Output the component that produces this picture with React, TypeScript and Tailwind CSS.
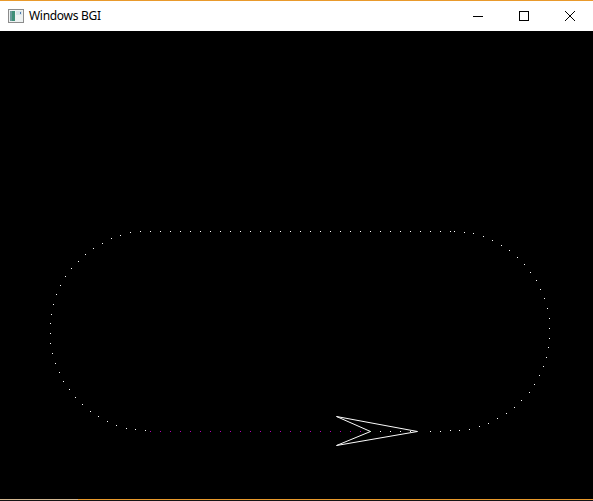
const WHITE = '#fcfcfc'
const MAGENTA = '#b400b4'
const GREEN = '#3cd83c'

// pixel dots along the track, page coordinates
const arcRight: [number, number][] = [
  [454, 231], [464, 232], [473, 233], [483, 236], [492, 240], [501, 245], [509, 250],
  [517, 257], [524, 264], [530, 272], [536, 280], [540, 289], [544, 298], [547, 308],
  [549, 318], [549, 328], [549, 338], [548, 347], [546, 357], [543, 366], [539, 375],
  [534, 384], [529, 392], [521, 400], [514, 407], [506, 413], [497, 418], [488, 423],
  [479, 426], [469, 429], [459, 430], [450, 430], [440, 431], [430, 431],
]

const arcLeft: [number, number][] = [
  [145, 430], [135, 429], [126, 428], [116, 425], [107, 421], [98, 416], [90, 411],
  [82, 404], [75, 397], [69, 389], [63, 381], [59, 372], [55, 363], [52, 353],
  [50, 343], [50, 333], [50, 323], [51, 314], [53, 304], [56, 294], [60, 285],
  [65, 276], [71, 268], [78, 261], [85, 254], [93, 248], [102, 243], [111, 238],
  [120, 235], [130, 232],
]

function buildDots() {
  const out: { x: number; y: number; c: string }[] = []
  for (let x = 140; x <= 450; x += 10) out.push({ x, y: 231, c: WHITE })
  arcRight.forEach(([x, y]) => out.push({ x, y, c: WHITE }))
  for (let x = 380; x <= 410; x += 10) out.push({ x, y: 431, c: WHITE })
  out.push({ x: 370, y: 431, c: GREEN })
  for (let x = 150; x <= 360; x += 10) out.push({ x, y: 431, c: MAGENTA })
  arcLeft.forEach(([x, y]) => out.push({ x, y, c: WHITE }))
  return out
}

function AppIcon() {
  return (
    <svg width="16" height="14" viewBox="0 0 16 14" shapeRendering="crispEdges">
      <rect x="0.5" y="0.5" width="15" height="13" fill="#eef2f2" stroke="#8c8c8c" />
      <rect x="2" y="2" width="5" height="10" fill="#3f8f78" />
      <rect x="2" y="2" width="2" height="10" fill="#6a9a9a" />
      <rect x="8" y="2" width="6" height="4" fill="#d8e4e8" />
      <rect x="12" y="3" width="1" height="2" fill="#4a78b0" />
    </svg>
  )
}

function TitleBar() {
  return (
    <div className="flex h-[31px] items-stretch border-t border-[#e99a2c] bg-white">
      <div className="flex flex-1 items-center gap-[5px] pl-[8px]">
        <AppIcon />
        <span
          className="text-[12px] tracking-[-0.3px] text-black"
          style={{ fontFamily: '"Noto Sans", "Open Sans", sans-serif' }}
        >
          Windows BGI
        </span>
      </div>
      <div className="flex w-[46px] items-center justify-center">
        <div className="h-px w-[10px] bg-black" />
      </div>
      <div className="flex w-[46px] items-center justify-center">
        <div className="h-[10px] w-[10px] border border-black" />
      </div>
      <div className="flex w-[46px] items-center justify-center">
        <svg width="10" height="10" viewBox="0 0 10 10">
          <path d="M0 0L10 10M10 0L0 10" stroke="#000" strokeWidth="1" />
        </svg>
      </div>
    </div>
  )
}

export default function App() {
  const dots = buildDots()
  return (
    <div className="flex h-[501px] w-[593px] flex-col overflow-hidden bg-black">
      <TitleBar />
      <div className="flex-1 bg-black">
        <svg width="593" height="468" viewBox="0 31 593 468" shapeRendering="crispEdges" className="block">
          {dots.map((d, i) => (
            <rect key={i} x={d.x} y={d.y} width="1" height="1" fill={d.c} />
          ))}
          <polygon
            points="336.5,416.5 417.5,431.5 336.5,445.5 370.5,431.5"
            fill="none"
            stroke={WHITE}
            strokeWidth="1"
            shapeRendering="auto"
          />
        </svg>
      </div>
      <div className="flex h-px">
        <div className="w-[78px] bg-[#d4b891]" />
        <div className="flex-1 bg-[#e99a2c]" />
      </div>
      <div className="h-px bg-[#141414]" />
    </div>
  )
}
